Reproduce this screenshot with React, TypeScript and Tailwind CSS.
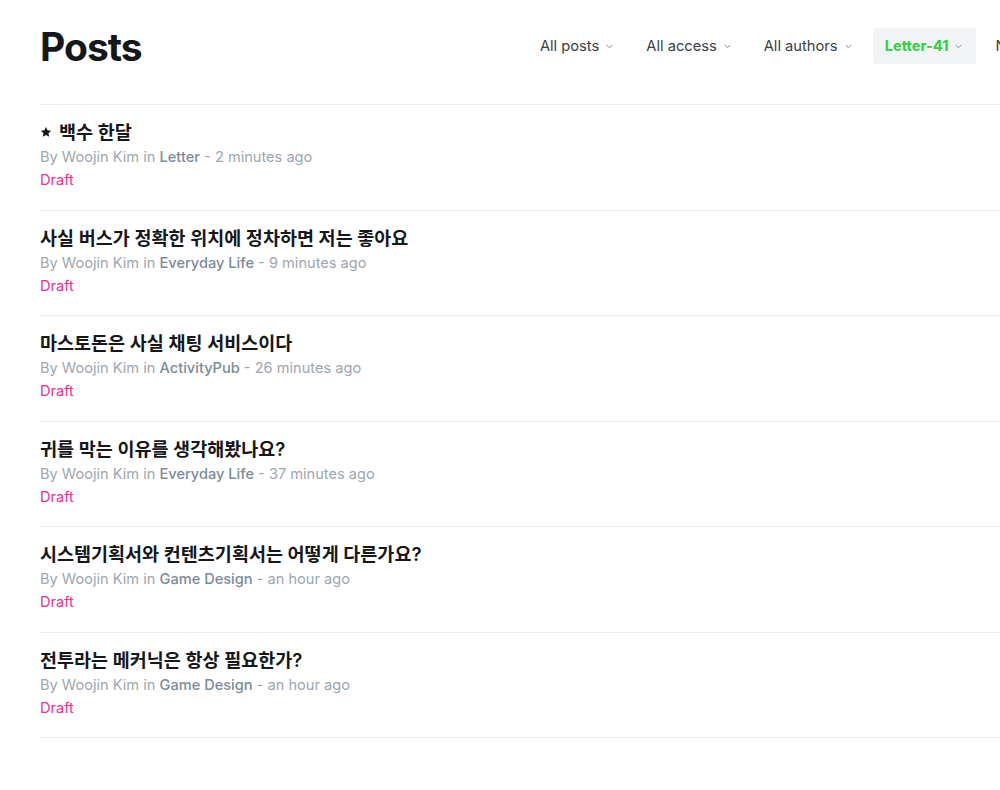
import React from "react";

type Post = {
  title: string;
  tag: string;
  time: string;
  featured?: boolean;
};

const posts: Post[] = [
  { title: "백수 한달", tag: "Letter", time: "2 minutes ago", featured: true },
  { title: "사실 버스가 정확한 위치에 정차하면 저는 좋아요", tag: "Everyday Life", time: "9 minutes ago" },
  { title: "마스토돈은 사실 채팅 서비스이다", tag: "ActivityPub", time: "26 minutes ago" },
  { title: "귀를 막는 이유를 생각해봤나요?", tag: "Everyday Life", time: "37 minutes ago" },
  { title: "시스템기획서와 컨텐츠기획서는 어떻게 다른가요?", tag: "Game Design", time: "an hour ago" },
  { title: "전투라는 메커닉은 항상 필요한가?", tag: "Game Design", time: "an hour ago" },
];

const filters = ["All posts", "All access", "All authors", "Letter-41", "Newest first"];

function Chevron() {
  return (
    <svg viewBox="0 0 10 10" className="w-[9px] h-[9px]" fill="none" stroke="currentColor" strokeWidth={1.1}>
      <path d="M2.2 3.6 L5 6.4 L7.8 3.6" strokeLinecap="round" strokeLinejoin="round" />
    </svg>
  );
}

function StarIcon() {
  return (
    <svg viewBox="0 0 24 24" className="w-[12px] h-[12px] mr-[7px] shrink-0" fill="currentColor">
      <path d="M12 1.8l3.1 6.6 7.2.9-5.3 5 1.4 7.1L12 17.9l-6.4 3.5 1.4-7.1-5.3-5 7.2-.9z" />
    </svg>
  );
}

export default function App() {
  return (
    <div
      className="w-[1000px] h-[790px] overflow-hidden bg-white"
      style={{ fontFamily: 'Inter, "Noto Sans CJK KR", sans-serif' }}
    >
      <div className="w-[1146px] pl-10 pr-10">
        {/* Header */}
        <div className="flex items-center h-12 mt-[22px] mb-[34px]">
          <h1 className="text-[39px] font-bold tracking-tight text-[#15171a] leading-none">Posts</h1>
          <div className="ml-auto flex items-center gap-2">
            {filters.map((f) => {
              const active = f === "Letter-41";
              return (
                <button
                  key={f}
                  className={
                    active
                      ? "flex items-center gap-[5px] h-9 pl-3 pr-[13px] rounded-[3px] bg-[#f1f3f4] text-[14.7px] font-bold text-[#30cf43]"
                      : "flex items-center gap-[6px] h-9 px-3 text-[14.7px] text-[#394047]"
                  }
                >
                  {f}
                  <span className="text-[#7c8b9a]">
                    <Chevron />
                  </span>
                </button>
              );
            })}
          </div>
        </div>

        {/* Post list */}
        <ul className="border-t border-[#ebeef0]">
          {posts.map((p) => (
            <li key={p.title} className="border-b border-[#ebeef0] pt-[15px] pb-[18.5px]">
              <h3 className="flex items-center text-[18.5px] font-semibold leading-6 text-[#15171a]">
                {p.featured && <StarIcon />}
                {p.title}
              </h3>
              <p className="mt-[2px] text-[14.6px] leading-[22px] text-[#9ea6af]">
                By Woojin Kim in <span className="font-medium text-[#7c8b9a]">{p.tag}</span> - {p.time}
              </p>
              <p className="mt-[1px] text-[14.6px] leading-[22px] text-[#f0308c]">Draft</p>
            </li>
          ))}
        </ul>
      </div>
    </div>
  );
}
